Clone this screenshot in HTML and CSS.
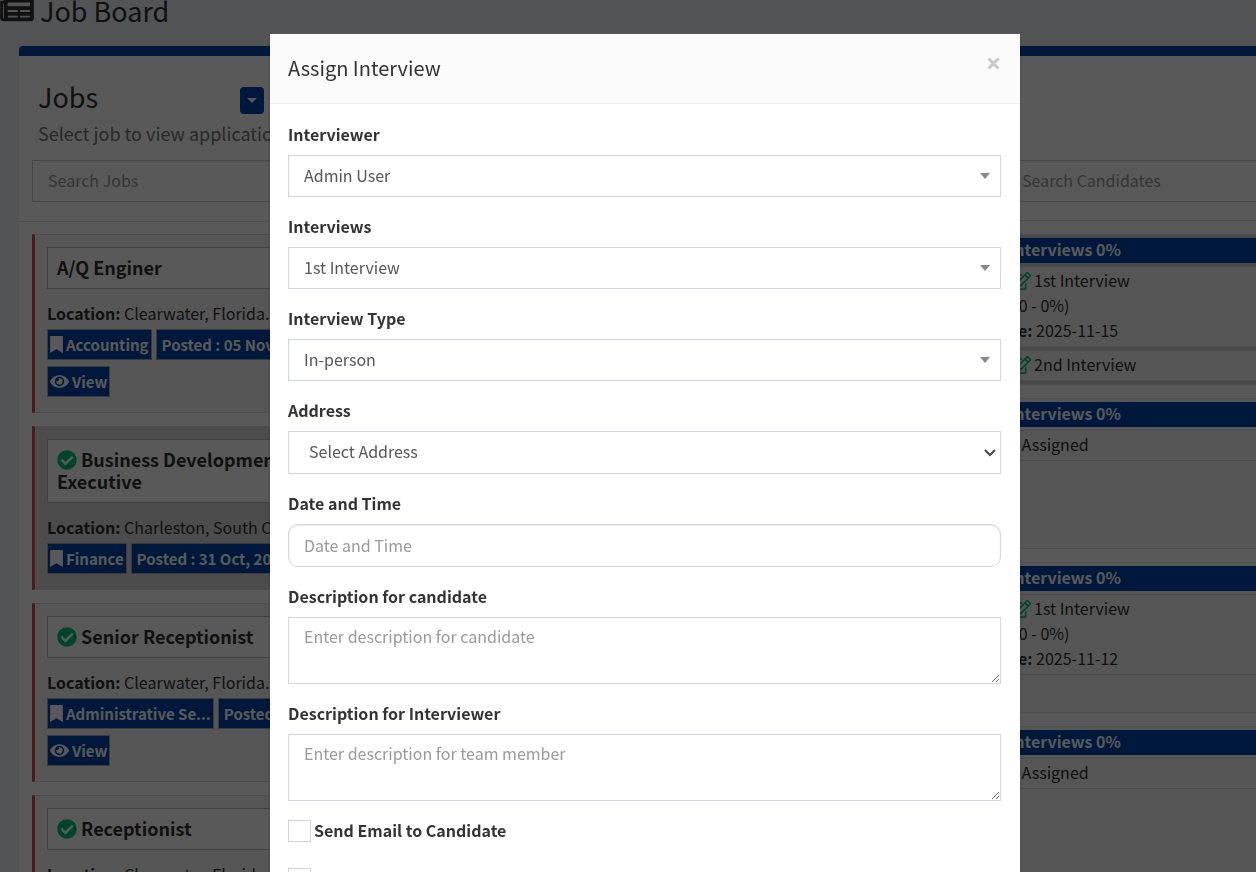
FILE: index.html
```html
<!DOCTYPE html>
<html lang="en">
<head>
    <meta charset="UTF-8">
    <meta name="viewport" content="width=device-width, initial-scale=1.0">
    <title>Job Board</title>
    <link rel="stylesheet" href="styles.css">
</head>
<body>
    <!-- Shared icons -->
    <svg class="icon-defs" aria-hidden="true">
        <symbol id="icon-check" viewBox="0 0 512 512"><path d="M504 256c0 136.967-111.033 248-248 248S8 392.967 8 256 119.033 8 256 8s248 111.033 248 248zM227.314 387.314l184-184c6.248-6.248 6.248-16.379 0-22.627l-22.627-22.627c-6.248-6.249-16.379-6.249-22.628 0L216 308.118l-70.059-70.059c-6.248-6.248-16.379-6.248-22.628 0l-22.627 22.627c-6.248 6.248-6.248 16.379 0 22.627l104 104c6.249 6.249 16.379 6.249 22.628.001z"/></symbol>
        <symbol id="icon-bookmark" viewBox="0 0 384 512"><path d="M0 512V16C0 6 6 0 16 0h352c10 0 16 6 16 16v496L192 400 0 512z"/></symbol>
        <symbol id="icon-eye" viewBox="0 0 576 512"><path d="M572.52 241.4C518.29 135.59 410.93 64 288 64S57.68 135.64 3.48 241.41a32.35 32.35 0 0 0 0 29.19C57.71 376.41 165.07 448 288 448s230.32-71.64 284.52-177.41a32.35 32.35 0 0 0 0-29.19zM288 400a144 144 0 1 1 144-144 143.93 143.93 0 0 1-144 144zm0-240a95.31 95.31 0 0 0-25.31 3.79 47.85 47.85 0 0 1-66.9 66.9A95.78 95.78 0 1 0 288 160z"/></symbol>
        <symbol id="icon-edit" viewBox="0 0 576 512"><path d="M402.3 344.9l32-32c5-5 13.7-1.5 13.7 5.7V464c0 26.5-21.5 48-48 48H48c-26.5 0-48-21.5-48-48V112c0-26.5 21.5-48 48-48h273.5c7.1 0 10.7 8.6 5.7 13.7l-32 32c-1.5 1.5-3.5 2.3-5.7 2.3H48v352h352V350.5c0-2.1.8-4.1 2.3-5.6zm156.6-201.8L296.3 405.7l-90.4 10c-26.2 2.9-48.5-19.2-45.6-45.6l10-90.4L432.9 17.1c22.9-22.9 59.9-22.9 82.7 0l43.2 43.2c22.9 22.9 22.9 60 .1 82.8zM460.1 174L402 115.9 216.2 301.8l-7.3 65.3 65.3-7.3L460.1 174zm64.8-79.7l-43.2-43.2c-4.1-4.1-10.8-4.1-14.8 0L436 82l58.1 58.1 30.9-30.9c4-4.2 4-10.8-.1-14.9z"/></symbol>
    </svg>

    <div class="page">
        <h1 class="page-title">
            <svg class="icon-news" viewBox="0 0 576 512"><path d="M552 64H88c-13.255 0-24 10.745-24 24v8H24c-13.255 0-24 10.745-24 24v272c0 30.928 25.072 56 56 56h472c26.51 0 48-21.49 48-48V88c0-13.255-10.745-24-24-24zM56 400a8 8 0 0 1-8-8V144h16v248a8 8 0 0 1-8 8zm236-16H140c-6.627 0-12-5.373-12-12v-8c0-6.627 5.373-12 12-12h152c6.627 0 12 5.373 12 12v8c0 6.627-5.373 12-12 12zm208 0H348c-6.627 0-12-5.373-12-12v-8c0-6.627 5.373-12 12-12h152c6.627 0 12 5.373 12 12v8c0 6.627-5.373 12-12 12zm-208-96H140c-6.627 0-12-5.373-12-12v-8c0-6.627 5.373-12 12-12h152c6.627 0 12 5.373 12 12v8c0 6.627-5.373 12-12 12zm208 0H348c-6.627 0-12-5.373-12-12v-8c0-6.627 5.373-12 12-12h152c6.627 0 12 5.373 12 12v8c0 6.627-5.373 12-12 12zm0-96H140c-6.627 0-12-5.373-12-12v-40c0-6.627 5.373-12 12-12h360c6.627 0 12 5.373 12 12v40c0 6.627-5.373 12-12 12z"/></svg>
            Job Board
        </h1>

        <div class="board">
            <section class="jobs">
                <div class="column-header">
                    <div class="title-row">
                        <h2>Jobs</h2>
                        <button type="button" class="btn-caret" aria-label="Filter jobs"><span class="caret"></span></button>
                    </div>
                    <p class="subtitle">Select job to view applications</p>
                    <input type="text" class="search" placeholder="Search Jobs" aria-label="Search Jobs">
                </div>

                <div class="job-list">
                    <article class="job-card">
                        <h3>A/Q Enginer</h3>
                        <p class="location"><b>Location:</b> Clearwater, Florida. US</p>
                        <div class="tags">
                            <span class="tag"><svg class="icon-bookmark"><use href="#icon-bookmark"/></svg>Accounting</span>
                            <span class="tag tag-date">Posted : 05 Nov, 2025</span>
                            <button type="button" class="tag"><svg class="icon-eye"><use href="#icon-eye"/></svg>View</button>
                        </div>
                    </article>

                    <article class="job-card active">
                        <h3><svg class="icon-check"><use href="#icon-check"/></svg> Business Development Executive</h3>
                        <p class="location"><b>Location:</b> Charleston, South Carolina</p>
                        <div class="tags">
                            <span class="tag"><svg class="icon-bookmark"><use href="#icon-bookmark"/></svg>Finance</span>
                            <span class="tag tag-date">Posted : 31 Oct, 2025</span>
                        </div>
                    </article>

                    <article class="job-card">
                        <h3><svg class="icon-check"><use href="#icon-check"/></svg> Senior Receptionist</h3>
                        <p class="location"><b>Location:</b> Clearwater, Florida. US</p>
                        <div class="tags">
                            <span class="tag"><svg class="icon-bookmark"><use href="#icon-bookmark"/></svg>Administrative Se...</span>
                            <span class="tag tag-date">Posted</span>
                            <button type="button" class="tag"><svg class="icon-eye"><use href="#icon-eye"/></svg>View</button>
                        </div>
                    </article>

                    <article class="job-card">
                        <h3><svg class="icon-check"><use href="#icon-check"/></svg> Receptionist</h3>
                        <p class="location"><b>Location:</b> Clearwater, Florida. US</p>
                        <div class="tags">
                            <span class="tag"><svg class="icon-bookmark"><use href="#icon-bookmark"/></svg>Accounting</span>
                        </div>
                    </article>
                </div>
            </section>

            <section class="candidates">
                <div class="column-header">
                    <input type="text" class="search" placeholder="Search Candidates" aria-label="Search Candidates">
                </div>

                <div class="candidate-list">
                    <article class="candidate active">
                        <h4>All Interviews 0%</h4>
                        <div class="interview">
                            <p class="round"><svg class="icon-edit"><use href="#icon-edit"/></svg>1st Interview</p>
                            <p>All (0 - 0%)</p>
                            <p><b>Date:</b> 2025-11-15</p>
                        </div>
                        <div class="interview">
                            <p class="round"><svg class="icon-edit"><use href="#icon-edit"/></svg>2nd Interview</p>
                        </div>
                    </article>

                    <article class="candidate">
                        <h4>All Interviews 0%</h4>
                        <div class="interview">
                            <p>Not Assigned</p>
                        </div>
                    </article>

                    <article class="candidate">
                        <h4>All Interviews 0%</h4>
                        <div class="interview">
                            <p class="round"><svg class="icon-edit"><use href="#icon-edit"/></svg>1st Interview</p>
                            <p>All (0 - 0%)</p>
                            <p><b>Date:</b> 2025-11-12</p>
                        </div>
                    </article>

                    <article class="candidate">
                        <h4>All Interviews 0%</h4>
                        <div class="interview">
                            <p>Not Assigned</p>
                        </div>
                    </article>
                </div>
            </section>
        </div>
    </div>

    <!-- Assign interview modal -->
    <div class="modal-overlay">
        <div class="modal" role="dialog" aria-labelledby="modal-title">
            <div class="modal-header">
                <h2 id="modal-title">Assign Interview</h2>
                <button type="button" class="close" aria-label="Close">
                    <svg viewBox="0 0 12 12"><path d="M2 2l8 8M10 2l-8 8"/></svg>
                </button>
            </div>
            <form class="modal-body">
                <div class="form-group">
                    <label for="interviewer">Interviewer</label>
                    <select id="interviewer" class="form-control dropdown">
                        <option>Admin User</option>
                    </select>
                </div>
                <div class="form-group">
                    <label for="interviews">Interviews</label>
                    <select id="interviews" class="form-control dropdown">
                        <option>1st Interview</option>
                        <option>2nd Interview</option>
                    </select>
                </div>
                <div class="form-group">
                    <label for="interview-type">Interview Type</label>
                    <select id="interview-type" class="form-control dropdown">
                        <option>In-person</option>
                    </select>
                </div>
                <div class="form-group">
                    <label for="address">Address</label>
                    <select id="address" class="form-control address">
                        <option>Select Address</option>
                    </select>
                </div>
                <div class="form-group">
                    <label for="date-time">Date and Time</label>
                    <input type="text" id="date-time" class="form-control date-time" placeholder="Date and Time">
                </div>
                <div class="form-group">
                    <label for="candidate-text">Description for candidate</label>
                    <textarea id="candidate-text" class="form-control" placeholder="Enter description for candidate"></textarea>
                </div>
                <div class="form-group">
                    <label for="interviewer-text">Description for Interviewer</label>
                    <textarea id="interviewer-text" class="form-control" placeholder="Enter description for team member"></textarea>
                </div>
                <div class="check-row">
                    <input type="checkbox" id="email-candidate">
                    <label for="email-candidate">Send Email to Candidate</label>
                </div>
                <div class="check-row">
                    <input type="checkbox" id="email-interviewer" aria-label="Send Email to Interviewer">
                </div>
            </form>
        </div>
    </div>
</body>
</html>
```
FILE: styles.css
```css
* {
    box-sizing: border-box;
}

body {
    margin: 0;
    height: 100vh;
    overflow: hidden;
    background: #ecf0f5;
    color: #333;
    font-family: "Noto Sans CJK SC", "Open Sans", sans-serif;
    font-size: 16px;
    line-height: 25px;
}

h1, h2, h3, h4, p {
    margin: 0;
    font-weight: normal;
}

button, input, select, textarea {
    font: inherit;
    color: inherit;
}

svg {
    fill: currentColor;
}

.icon-defs {
    display: none;
}

.page-title {
    display: flex;
    align-items: center;
    gap: 6px;
    height: 20px;
    margin-bottom: 26px;
    font-size: 27px;
}

.icon-news {
    width: 34px;
    height: 30px;
}

.board {
    display: grid;
    grid-template-columns: 340px 271px;
    justify-content: space-between;
    margin-left: 19px;
    background: #fff;
    border-top: 10px solid #0047ab;
    border-radius: 4px 0 0 0;
}

.column-header {
    height: 166px;
    padding: 24px 13px 0;
    border-bottom: 1px solid #ddd;
}

.title-row {
    display: flex;
    align-items: center;
    justify-content: space-between;
    height: 40px;
    padding: 0 82px 0 6px;
}

.title-row h2 {
    padding-bottom: 7px;
    font-size: 27px;
}

.btn-caret {
    display: flex;
    align-items: center;
    justify-content: center;
    width: 24px;
    height: 27px;
    padding: 0;
    background: #0047ab;
    border: none;
    border-radius: 4px;
}

.caret {
    border: 5px solid transparent;
    border-top-color: #fff;
    border-bottom: 0;
}

.subtitle {
    height: 40px;
    padding: 1px 6px;
    color: #777;
    font-size: 18px;
    white-space: nowrap;
}

.search {
    width: 100%;
    height: 42px;
    padding: 0 15px 2px;
    background: #fff;
    border: 1px solid #ccc;
}

::placeholder {
    color: #999;
    opacity: 1;
}

.job-list {
    display: flex;
    flex-direction: column;
    gap: 13px;
    padding: 12px 13px;
}

.job-card {
    padding: 12px 12px 15px;
    background: #f7f7f7;
    border: 1px solid #ddd;
    border-left: 3px solid #dd4b39;
}

.job-card.active {
    background: #dadada;
}

.job-card h3 {
    margin-bottom: 12px;
    padding: 8px 9px 10px;
    background: #fff;
    border: 1px solid #bbb;
    font-size: 18px;
    font-weight: bold;
    line-height: 22px;
}

.icon-check {
    width: 20px;
    height: 20px;
    color: #00c77c;
    vertical-align: -3px;
}

.location {
    margin-bottom: 3px;
    white-space: nowrap;
}

.tags {
    display: flex;
    flex-wrap: wrap;
    gap: 6px 4px;
}

.tag {
    display: flex;
    align-items: center;
    gap: 3px;
    height: 31px;
    padding: 0 2px;
    background: #0047ab;
    border: 1px solid #aaa;
    color: #fff;
    font-size: 15px;
    font-weight: bold;
}

.tag-date {
    padding: 0 5px;
}

.icon-bookmark {
    width: 13px;
    height: 17px;
}

.icon-eye {
    width: 19px;
    height: 17px;
}

.candidates .column-header {
    height: 165px;
    padding: 104px 0 0 21px;
}

.candidates .search {
    border-right: none;
}

.candidate-list {
    display: flex;
    flex-direction: column;
    gap: 13px;
    padding-top: 13px;
}

.candidate {
    min-height: 151px;
    padding-top: 3px;
    background: #f7f7f7;
    border: 1px solid #ddd;
    border-width: 1px 0;
}

.candidate.active {
    background: #d2d2d2;
}

.candidate h4 {
    padding-bottom: 2px;
    background: #0047ab;
    color: #fff;
    font-weight: bold;
    line-height: 23px;
}

.interview {
    margin-top: 3px;
    padding: 1px 6px 3px;
    background: #f7f7f7;
    border: 1px solid #ddd;
    border-width: 1px 0;
}

.round {
    display: flex;
    align-items: center;
    gap: 3px;
    padding-left: 20px;
}

.icon-edit {
    width: 20px;
    height: 18px;
    color: #00c77c;
}

/* Modal */
.modal-overlay {
    position: fixed;
    inset: 0;
    padding: 34px 0 0 34px;
    overflow: hidden;
    background: rgba(0, 0, 0, 0.65);
}

.modal {
    max-width: 750px;
    margin: 0 auto;
    background: #fff;
    box-shadow: 0 2px 4px rgba(0, 0, 0, 0.2);
}

.modal-header {
    display: flex;
    justify-content: space-between;
    align-items: flex-start;
    padding: 17px 19px 19px 18px;
    background: #fafafa;
    border-bottom: 1px solid #eee;
}

.modal-header h2 {
    font-size: 20px;
    line-height: 33px;
}

.close {
    display: flex;
    padding: 5px 0;
    background: none;
    border: none;
    color: #c8c8c8;
}

.close svg {
    width: 15px;
    height: 15px;
    stroke: currentColor;
    stroke-width: 2.4;
}

.modal-body {
    padding: 18px 19px 18px 18px;
}

.form-group {
    margin-bottom: 17px;
}

.form-group label {
    display: block;
    margin-bottom: 8px;
    font-weight: bold;
}

.form-control {
    display: block;
    width: 100%;
    height: 43px;
    padding: 0 15px 2px;
    background: #fff;
    border: 1px solid #d2d6de;
    border-radius: 0;
    color: #555;
    appearance: none;
}

.dropdown {
    height: 42px;
    background: #fff url("data:image/svg+xml,%3Csvg xmlns='http://www.w3.org/2000/svg' width='10' height='6'%3E%3Cpath d='M0 0h10L5 6z' fill='%23888'/%3E%3C/svg%3E") no-repeat right 10px center;
}

.address {
    padding-left: 20px;
    background: #fff url("data:image/svg+xml,%3Csvg xmlns='http://www.w3.org/2000/svg' width='12' height='8'%3E%3Cpath d='M1 1l5 5 5-5' fill='none' stroke='%23444' stroke-width='2'/%3E%3C/svg%3E") no-repeat right 4px center;
}

.date-time {
    border-radius: 10px;
    box-shadow: inset 0 1px 2px rgba(0, 0, 0, 0.1);
}

textarea.form-control {
    height: 67px;
    padding: 6px 15px;
}

.check-row {
    display: flex;
    align-items: center;
    gap: 3px;
    min-height: 25px;
    margin-bottom: 23px;
}

.check-row input {
    width: 23px;
    height: 22px;
    margin: 0;
    background: #fff;
    border: 1px solid #d2d2d2;
    appearance: none;
}

.check-row input:checked {
    background: #0047ab;
}

.check-row label {
    font-weight: bold;
}
```
